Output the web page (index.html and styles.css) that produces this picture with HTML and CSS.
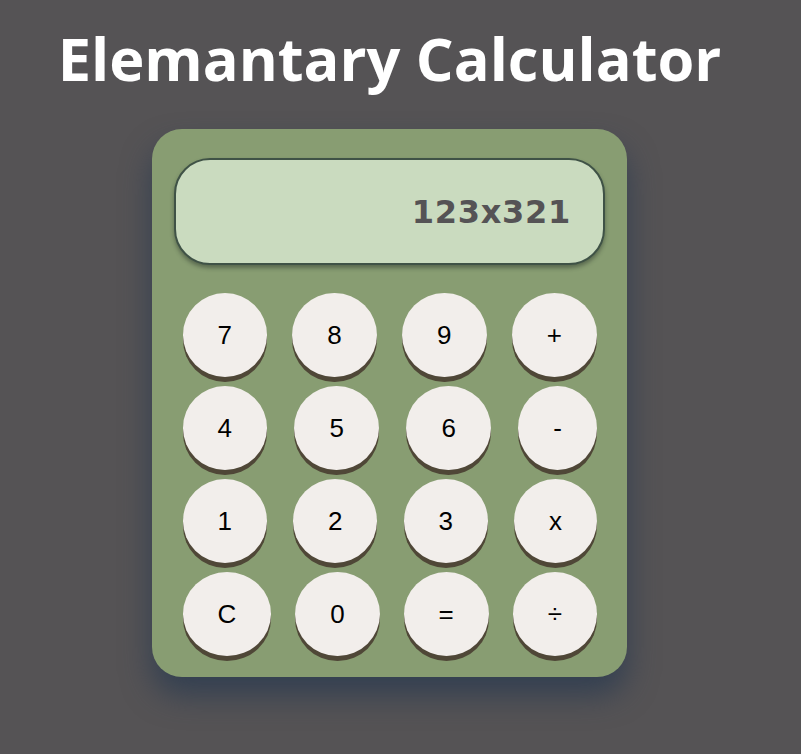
FILE: index.html
```html
<!DOCTYPE html>
<html lang="en">
<head>
<meta charset="utf-8">
<title>Elemantary Calculator</title>
<link rel="stylesheet" href="styles.css">
</head>
<body>
<main class="page">
  <h1 class="title">Elemantary Calculator</h1>
  <div class="calc">
    <div class="display"><span class="readout">123x321</span></div>
    <div class="keys">
      <div class="row">
        <button class="key">7</button>
        <button class="key">8</button>
        <button class="key">9</button>
        <button class="key">+</button>
      </div>
      <div class="row">
        <button class="key">4</button>
        <button class="key">5</button>
        <button class="key">6</button>
        <button class="key">-</button>
      </div>
      <div class="row">
        <button class="key">1</button>
        <button class="key">2</button>
        <button class="key">3</button>
        <button class="key">x</button>
      </div>
      <div class="row">
        <button class="key">C</button>
        <button class="key">0</button>
        <button class="key">=</button>
        <button class="key">÷</button>
      </div>
    </div>
  </div>
</main>
</body>
</html>
```
FILE: styles.css
```css
html, body {
  margin: 0;
  padding: 0;
  background: #555355;
  height: 100%;
}

.page {
  width: 779px;
  display: flex;
  flex-direction: column;
  align-items: center;
}

.title {
  margin: 23px 0 0;
  font-family: "Open Sans", "DejaVu Sans", sans-serif;
  font-weight: 700;
  font-size: 59.5px;
  line-height: 70px;
  color: #ffffff;
}

.calc {
  margin-top: 36px;
  width: 475px;
  height: 548px;
  box-sizing: border-box;
  padding: 29px 22px 22px;
  background: #889d72;
  border-radius: 30px;
  box-shadow: 0 18px 30px rgba(40, 58, 80, 0.75);
}

.display {
  height: 107px;
  box-sizing: border-box;
  border: 2px solid #3f5246;
  border-radius: 36px;
  background: #cadbbf;
  box-shadow: 0 3px 4px rgba(30, 40, 35, 0.45);
  display: flex;
  align-items: center;
  justify-content: flex-end;
  padding-right: 32px;
}

.readout {
  font-family: "DejaVu Sans", sans-serif;
  font-weight: 700;
  font-size: 32px;
  letter-spacing: 0.7px;
  color: #555355;
}

.keys {
  margin-top: 28px;
  padding: 0 8px 0 8.5px;
  display: flex;
  flex-direction: column;
  gap: 9px;
}

.row {
  display: flex;
  justify-content: space-between;
}

.key {
  height: 84px;
  padding: 0 35px;
  border: none;
  border-radius: 50%;
  background: #f2eeeb;
  box-shadow: 0 5px 0 #4f4737;
  font-family: "Liberation Sans", Arial, sans-serif;
  font-size: 26px;
  color: #000;
  cursor: pointer;
}
```
